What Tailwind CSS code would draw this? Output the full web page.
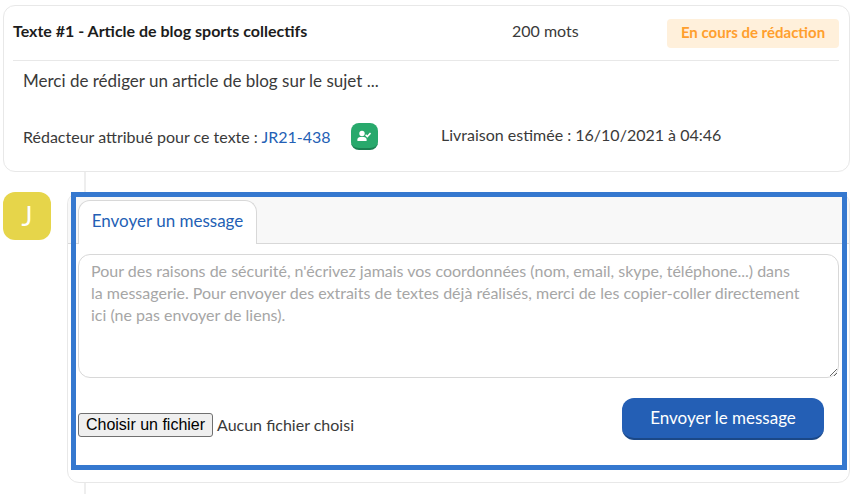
<!DOCTYPE html>
<html lang="fr">
<head>
<meta charset="UTF-8">
<meta name="viewport" content="width=device-width, initial-scale=1.0">
<title>Texte #1 - Messagerie</title>
<script src="https://cdn.jsdelivr.net/npm/@tailwindcss/browser@4"></script>
</head>
<body class="bg-white text-[#3a3a3a] font-[Lato,sans-serif] text-base leading-6">
<main class="pl-[3px] pr-[5px] pt-[5px]">
<section class="border border-[#e8e8e8] rounded-xl pl-[9px] pr-[10px] pb-[21px]">
<header class="flex items-start border-b border-[#e8e8e8] pt-[13px] pb-3">
<h1 class="w-[499px] font-bold text-[#1c1c1c]">Texte #1 - Article de blog sports collectifs</h1>
<span class="flex-1">200 mots</span>
<span class="w-[172px] rounded bg-[#fff0db] pt-[2px] pb-1 text-center text-[15px] font-bold leading-[23px] text-[#ff9f2e]">En cours de rédaction</span>
</header>
<div class="px-[10px] pt-2">
<p class="text-[17px]">Merci de rédiger un article de blog sur le sujet ...</p>
<div class="mt-[30px] flex items-start">
<div class="flex w-[418px] items-center">
<p>Rédacteur attribué pour ce texte : <a href="#" class="text-[#245fb5]">JR21-438</a></p>
<button type="button" aria-label="Rédacteur validé" class="ml-5 flex h-[27px] w-[27px] items-center justify-center rounded-lg border-b-2 border-[#1c8052] bg-[#28a96c] text-white">
<svg class="h-3 w-[14px]" viewBox="0 0 14 12" fill="currentColor"><circle cx="5" cy="3.5" r="2.7"/><path d="M.4 10.9V9.6C.4 7.9 1.7 7 3.2 7h3.6c1.5 0 2.8.9 2.8 2.6v1.3z"/><path d="M8.6 4.8l1.7 1.8 3.2-3.5" fill="none" stroke="currentColor" stroke-width="1.5"/></svg>
</button>
</div>
<p>Livraison estimée : 16/10/2021 à 04:46</p>
</div>
</div>
</section>
<div class="ml-[81px] h-5 border-l-2 border-[#eeeeee]"></div>
<section class="flex items-start gap-4">
<div class="flex h-12 w-12 items-center justify-center rounded-xl bg-[#e6d54a] text-[26px] text-white">J</div>
<div class="relative flex-1 rounded-xl border border-[#e8e8e8]">
<div class="flex rounded-t-xl border-b border-[#d8d8d8] bg-[#f8f8f8] pl-[10px] pt-[7px]">
<button type="button" class="-mb-px h-11 w-[179px] rounded-t-xl border border-b-0 border-[#d8d8d8] bg-white pb-1 text-[17px] text-[#245fb5]">Envoyer un message</button>
</div>
<form class="px-[10px] pt-[10px] pb-[42px]">
<textarea aria-label="Message" class="block h-[124px] w-full rounded-xl border border-[#d8d8d8] pl-3 pr-9 py-[5px] leading-[22px] placeholder:text-[#a6a6a6]" placeholder="Pour des raisons de sécurité, n'écrivez jamais vos coordonnées (nom, email, skype, téléphone...) dans la messagerie. Pour envoyer des extraits de textes déjà réalisés, merci de les copier-coller directement ici (ne pas envoyer de liens)."></textarea>
<div class="mt-5 flex items-start justify-between pr-[15px]">
<div class="mt-[15px] flex items-center gap-1">
<input type="file" id="fichier" class="peer sr-only">
<label for="fichier" class="w-[135px] rounded-[3px] border border-[#707070] bg-[#efefef] text-center font-['Liberation_Sans',sans-serif] leading-[22px] text-black peer-focus-visible:outline-2">Choisir un fichier</label>
<span>Aucun fichier choisi</span>
</div>
<button type="submit" class="h-[42px] w-[202px] rounded-xl border-b-2 border-[#1b4887] bg-[#245fb5] text-[17px] text-white">Envoyer le message</button>
</div>
</form>
<div class="pointer-events-none absolute -top-px bottom-[12px] left-[3px] right-[2px] border-[5px] border-[#3578cf]"></div>
</div>
</section>
<div class="ml-[81px] h-[11px] border-l-2 border-[#eeeeee]"></div>
</main>
</body>
</html>
